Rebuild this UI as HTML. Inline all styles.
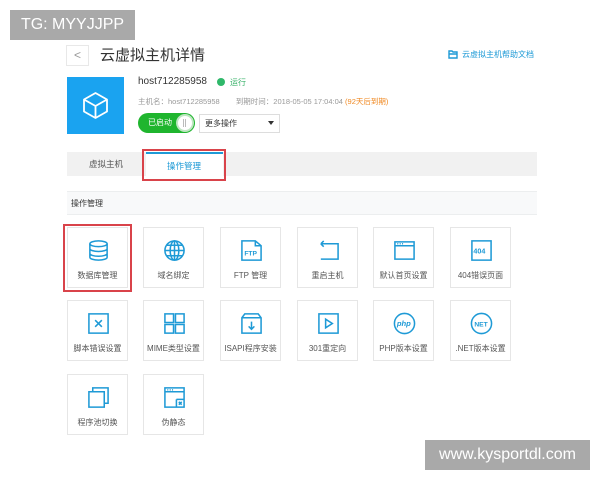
<!DOCTYPE html>
<html><head><meta charset="utf-8"><style>
*{margin:0;padding:0;box-sizing:border-box}
body{width:600px;height:480px;background:#fff;position:relative;overflow:hidden;font-family:"Liberation Sans","Noto Sans CJK SC",sans-serif;color:#333}
.a{position:absolute}
.tile{position:absolute;width:61px;height:61px;border:1px solid #e6e6e6;background:#fff}
.tile svg{position:absolute;left:19px;top:11px;width:23px;height:23px;fill:none;stroke:#1e9ad6;stroke-width:1.6}
.tile span{position:absolute;left:-8px;right:-8px;top:42px;text-align:center;font-size:8px;color:#555;white-space:nowrap}
.wm{position:absolute;background:#a9a9a9;color:#fff;font-size:16px;line-height:30px;text-align:center}
</style></head><body>
<div class="wm" style="left:10px;top:10px;width:125px;height:30px">TG: MYYJJPP</div>
<div class="wm" style="left:425px;top:440px;width:165px;height:30px">www.kysportdl.com</div>

<div class="a" style="left:66px;top:45px;width:23px;height:21px;border:1px solid #e8e8e8;color:#999;font-size:12px;text-align:center;line-height:19px">&lt;</div>
<div class="a" style="left:100px;top:44px;font-size:15px;color:#333">云虚拟主机详情</div>
<svg class="a" style="left:448px;top:50px" width="10" height="9" viewBox="0 0 10 9"><path d="M1 1h3l1 1h4v6H1z M1 4h8" fill="none" stroke="#1e9ad6" stroke-width="1.4"/></svg>
<div class="a" style="left:462px;top:49px;font-size:8px;color:#1e9ad6">云虚拟主机帮助文档</div>

<div class="a" style="left:67px;top:77px;width:57px;height:57px;background:#1aa3f0"></div>
<svg class="a" style="left:80px;top:90px" width="31" height="31" viewBox="0 0 31 31"><path d="M15.5 3L27 9.5v12L15.5 28 4 21.5v-12z M4 9.5l11.5 6.5L27 9.5 M15.5 16v12" fill="none" stroke="#fff" stroke-width="1.8" stroke-linejoin="round"/></svg>
<div class="a" style="left:138px;top:76px;font-size:10px;color:#333">host712285958</div>
<div class="a" style="left:217px;top:78px;width:8px;height:8px;border-radius:50%;background:#2fb86a"></div>
<div class="a" style="left:230px;top:77px;font-size:8px;color:#3bb36b">运行</div>
<div class="a" style="left:138px;top:96px;font-size:7.5px;color:#999;white-space:nowrap">主机名：host712285958 <span style="margin-left:14px">到期时间：2018-05-05 17:04:04 <span style="color:#f08a24">(92天后到期)</span></span></div>
<div class="a" style="left:138px;top:113px;width:57px;height:20px;border-radius:10px;background:#1fb52e"></div>
<div class="a" style="left:148px;top:117px;font-size:8px;color:#fff">已启动</div>
<div class="a" style="left:176px;top:114px;width:18px;height:18px;border-radius:50%;background:#fff;border:2px solid #bfe6c2"></div>
<div class="a" style="left:183px;top:119px;width:3px;height:8px;border-left:1px solid #bbb;border-right:1px solid #bbb"></div>
<div class="a" style="left:199px;top:114px;width:81px;height:19px;border:1px solid #ddd;background:#fff"></div>
<div class="a" style="left:205px;top:118px;font-size:8px;color:#333">更多操作</div>
<div class="a" style="left:268px;top:121px;width:0;height:0;border-left:3px solid transparent;border-right:3px solid transparent;border-top:4px solid #333"></div>

<div class="a" style="left:67px;top:152px;width:470px;height:24px;background:#f1f1f1"></div>
<div class="a" style="left:146px;top:152px;width:77px;height:24px;background:#fff;border-top:2px solid #1e9ad6"></div>
<div class="a" style="left:89px;top:158px;font-size:8.5px;color:#555">虚拟主机</div>
<div class="a" style="left:167px;top:160px;font-size:8.5px;color:#1e9ad6">操作管理</div>
<div class="a" style="left:142px;top:149px;width:84px;height:32px;border:2px solid #d9434a"></div>

<div class="a" style="left:67px;top:191px;width:470px;height:24px;background:#f8f9fa;border-top:1px solid #eceeef;border-bottom:1px solid #eceeef"></div>
<div class="a" style="left:71px;top:198px;font-size:8px;color:#333">操作管理</div>

<div class="tile" style="left:67px;top:227px"><svg viewBox="0 0 24 24"><ellipse cx="12" cy="5" rx="9" ry="3"/><path d="M3 5v14c0 1.7 4 3 9 3s9-1.3 9-3V5 M3 10c0 1.7 4 3 9 3s9-1.3 9-3 M3 15c0 1.7 4 3 9 3s9-1.3 9-3"/></svg><span>数据库管理</span></div>
<div class="a" style="left:63px;top:224px;width:69px;height:68px;border:2px solid #d9434a"></div>
<div class="tile" style="left:143px;top:227px"><svg viewBox="0 0 24 24"><circle cx="12" cy="12" r="10"/><ellipse cx="12" cy="12" rx="4.5" ry="10"/><path d="M2 12h20 M4 6.5h16 M4 17.5h16 M12 2v20"/></svg><span>域名绑定</span></div>
<div class="tile" style="left:220px;top:227px"><svg viewBox="0 0 24 24"><path d="M2 2h14l6 5v15H2z M16 2v5h6"/><text x="4.5" y="17" font-size="7" font-weight="bold" fill="#1e9ad6" stroke="none" font-family="Liberation Sans">FTP</text></svg><span>FTP 管理</span></div>
<div class="tile" style="left:297px;top:227px"><svg viewBox="0 0 24 24"><path d="M4 5h18v16H4 M4 5l3-3 M4 5l3 3"/></svg><span>重启主机</span></div>
<div class="tile" style="left:373px;top:227px"><svg viewBox="0 0 24 24"><path d="M2 3h20v18H2z M2 7h20 M4.5 5h1 M7 5h1 M9.5 5h1"/></svg><span>默认首页设置</span></div>
<div class="tile" style="left:450px;top:227px"><svg viewBox="0 0 24 24"><path d="M2 2h20v20H2z"/><text x="3.5" y="15" font-size="7.5" font-weight="bold" fill="#1e9ad6" stroke="none" font-family="Liberation Sans">404</text></svg><span>404错误页面</span></div>
<div class="tile" style="left:67px;top:300px"><svg viewBox="0 0 24 24"><path d="M2 2h20v20H2z M8.5 8.5l7 7 M15.5 8.5l-7 7"/></svg><span>脚本错误设置</span></div>
<div class="tile" style="left:143px;top:300px"><svg viewBox="0 0 24 24"><path d="M2 2h9v9H2z M13 2h9v9h-9z M2 13h9v9H2z M13 13h9v9h-9z"/></svg><span>MIME类型设置</span></div>
<div class="tile" style="left:220px;top:300px"><svg viewBox="0 0 24 24"><path d="M2 6l3-4h14l3 4v16H2z M2 6h20 M12 10v8 M9 15l3 3 3-3"/></svg><span>ISAPI程序安装</span></div>
<div class="tile" style="left:297px;top:300px"><svg viewBox="0 0 24 24"><path d="M2 2h20v20H2z M9 7.5v9l7-4.5z"/></svg><span>301重定向</span></div>
<div class="tile" style="left:373px;top:300px"><svg viewBox="0 0 24 24"><circle cx="12" cy="12" r="10.5"/><text x="4" y="14.5" font-size="8" font-style="italic" font-weight="bold" fill="#1e9ad6" stroke="none" font-family="Liberation Sans">php</text></svg><span>PHP版本设置</span></div>
<div class="tile" style="left:450px;top:300px"><svg viewBox="0 0 24 24"><circle cx="12" cy="12" r="10.5"/><text x="4.5" y="15" font-size="7" font-weight="bold" fill="#1e9ad6" stroke="none" font-family="Liberation Sans">NET</text></svg><span>.NET版本设置</span></div>
<div class="tile" style="left:67px;top:374px"><svg viewBox="0 0 24 24"><path d="M2 6h16v16H2z M6 6V2h16v16h-4"/></svg><span>程序池切换</span></div>
<div class="tile" style="left:143px;top:374px"><svg viewBox="0 0 24 24"><path d="M2 2h20v20H2z M2 6h20 M4.5 4h1 M7 4h1 M9.5 4h1 M14 14h8 M14 14v8 M16.5 16.5l3 3 M19.5 16.5l-3 3"/></svg><span>伪静态</span></div>
</body></html>
